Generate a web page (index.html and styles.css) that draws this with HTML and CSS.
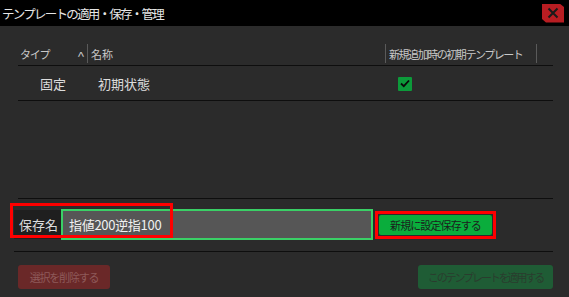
FILE: index.html
```html
<!DOCTYPE html>
<html lang="ja">
<head>
<meta charset="utf-8">
<link rel="stylesheet" href="styles.css">
</head>
<body>
<div class="dialog">
  <div class="titlebar">
    <span class="title">テンプレートの適用・保存・管理</span>
    <span class="close"><svg width="12" height="12" viewBox="0 0 12 12"><path d="M1.5 1.5L10.5 10.5M10.5 1.5L1.5 10.5" stroke="#1a1a1a" stroke-width="2"/></svg></span>
  </div>
  <div class="list">
    <div class="thead">
      <div class="th th-type"><span class="tlabel">タイプ</span><span class="sort">^</span></div>
      <div class="th th-name">名称</div>
      <div class="th th-def">新規追加時の初期テンプレート</div>
    </div>
    <div class="tr">
      <div class="td td-type">固定</div>
      <div class="td td-name">初期状態</div>
      <div class="td td-def"><span class="check"><svg width="10" height="9" viewBox="0 0 10 9"><path d="M1 4.5L3.8 7.2L9 1.5" stroke="#0a0a0a" stroke-width="1.8" fill="none"/></svg></span></div>
    </div>
  </div>
  <div class="saverow">
    <div class="label">保存名</div>
    <div class="input">指値200逆指100</div>
    <div class="btnwrap"><div class="savebtn">新規に設定保存する</div></div>
    <div class="highlight"></div>
  </div>
  <div class="footer">
    <div class="btn del">選択を削除する</div>
    <div class="btn apply">このテンプレートを適用する</div>
  </div>
</div>
</body>
</html>
```
FILE: styles.css
```css
* { box-sizing: border-box; }
html, body { margin: 0; padding: 0; }
body {
  width: 569px; height: 297px; overflow: hidden;
  background: #2b2b2b;
  font-family: "Noto Sans CJK JP", "Noto Sans", sans-serif;
  color: #d8d8d8;
  white-space: nowrap;
}
.titlebar {
  height: 26px; background: #000;
  display: flex; align-items: center; justify-content: space-between;
  padding: 0 5px 0 2px;
}
.title { font-size: 12.5px; color: #e6e6e6; letter-spacing: -1.75px; }
.close {
  width: 22px; height: 19px; background: #b81d22;
  display: flex; align-items: center; justify-content: center;
  clip-path: polygon(0 0, 80% 0, 100% 18%, 100% 100%, 18% 100%, 0 82%);
}
.list {
  margin: 17px 16px 0 18px;
  height: 156px;
  border-bottom: 1px solid #0e0e0e;
}
.thead {
  display: flex; height: 23px; border-bottom: 1px solid #0e0e0e;
  font-size: 11px; color: #c8c8c8;
}
.th { display: flex; align-items: center; position: relative; height: 100%; }
.th-type { width: 70px; padding-left: 2px; justify-content: space-between; padding-right: 4px; }
.tlabel { letter-spacing: -1.2px; }
.th-type::after, .th-name::after, .th-def::after {
  content: ""; position: absolute; right: 0; top: 1px; bottom: 2px; width: 1px; background: #5a5a5a;
}
.sort { font-size: 11px; transform: scaleX(1.3); margin-top: 1px; }
.th-name { width: 298px; padding-left: 3px; }
.th-def { width: 151px; padding-left: 3px; letter-spacing: -1.45px; }
.tr { display: flex; height: 35px; border-bottom: 1px solid #0e0e0e; align-items: center; font-size: 13px; color: #dcdcdc; }
.td-type { width: 70px; padding-left: 22px; }
.td-name { width: 298px; padding-left: 10px; }
.td-def { padding-left: 12px; display: flex; align-items: center; }
.check {
  width: 14px; height: 14px; background: #0c9a3a; border-radius: 1px;
  display: flex; align-items: center; justify-content: center; margin-top: 1px;
}
.saverow {
  position: relative;
  display: flex; align-items: center;
  margin: 0 16px 0 14px; height: 53px;
  border-bottom: 1px solid #0e0e0e;
  padding-bottom: 1px;
}
.label {
  width: 47px; height: 29px; background: #1f1f1f;
  display: flex; align-items: center; justify-content: center;
  font-size: 13px; color: #dcdcdc; padding-left: 2px;
}
.input {
  width: 312px; height: 31px; background: #565656;
  border: 2px solid #3ad066;
  display: flex; align-items: center; padding-left: 6px;
  font-size: 13px; color: #f0f0f0; letter-spacing: -0.3px;
}
.btnwrap {
  margin-left: 2px; border: 3px solid #ff0000; padding: 1px;
  width: 121px; height: 28px;
}
.savebtn {
  height: 100%; background: #0aad3c; border-radius: 2px;
  display: flex; align-items: center; justify-content: center;
  font-size: 11px; color: #1c1c1c; letter-spacing: -0.9px;
}
.highlight {
  position: absolute; left: -4px; top: 4px; width: 163px; height: 35px;
  border: 3px solid #ff0000; pointer-events: none;
}
.footer {
  display: flex; justify-content: space-between;
  margin: 13px 16px 0 18px;
}
.btn {
  height: 24px; border-radius: 3px;
  display: flex; align-items: center; justify-content: center;
  font-size: 11px;
}
.del { width: 92px; background: #6a2828; color: #8e5a5a; letter-spacing: -1.2px; }
.apply { width: 135px; background: #1f5c35; color: #2a3c2e; letter-spacing: -2.1px; }
```
